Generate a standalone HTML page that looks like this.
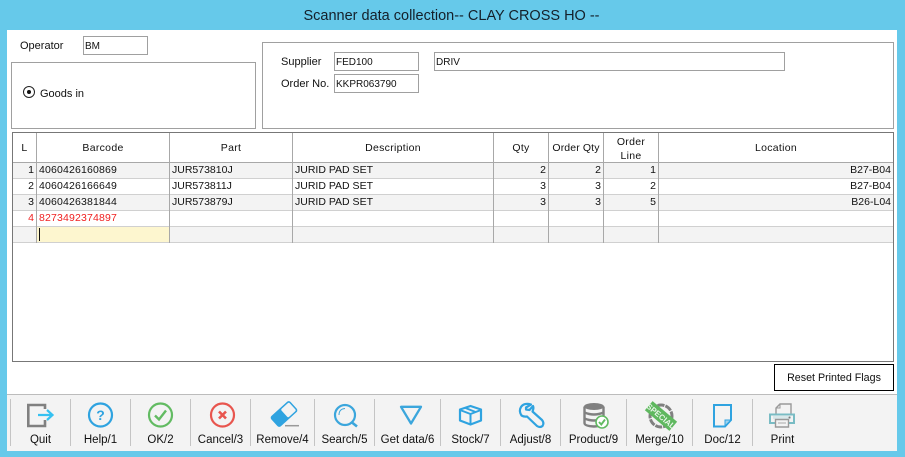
<!DOCTYPE html>
<html>
<head>
<meta charset="utf-8">
<style>
html,body{margin:0;padding:0}
body{width:905px;height:457px;overflow:hidden;position:relative;background:#66c9ea;font-family:"Liberation Sans",sans-serif;font-size:11px;color:#111}
div,span,svg{position:absolute;box-sizing:border-box}
.t{white-space:nowrap;line-height:14px}
.box{border:1px solid #a0a0a0;background:#fff}
.inp{border:1px solid #a0a0a0;background:#fff;padding-left:1px;line-height:19px;font-size:10px;white-space:nowrap}
.vh{width:1px;background:#a8a8a8;top:133px;height:110px}
.row{left:13px;width:880px;height:16px;border-bottom:1px solid #d0d0d0}
.c{white-space:nowrap;line-height:15px;font-size:10.5px}
.n{letter-spacing:.16px}
.h{text-align:center;white-space:nowrap;line-height:14px;font-size:10.5px;letter-spacing:.3px}
.sep{width:1px;background:#c4c4c4;top:399px;height:47px}
.l{top:433px;text-align:center;white-space:nowrap;font-size:11.5px;line-height:14px;color:#111}
</style>
</head>
<body>
<div class="t" style="left:-1px;top:7px;width:905px;text-align:center;font-size:14.5px;line-height:18px;color:#14202a">Scanner data collection-- CLAY CROSS HO --</div>
<div style="left:7px;top:30px;width:890px;height:421px;background:#fff"></div>

<div class="t" style="left:20px;top:39px">Operator</div>
<div class="inp" style="left:83px;top:36px;width:65px;height:19px">BM</div>
<div class="box" style="left:11px;top:62px;width:245px;height:67px"></div>
<svg style="left:22px;top:85px" width="15" height="15" viewBox="0 0 15 15"><circle cx="7" cy="7" r="5.5" fill="#fff" stroke="#222" stroke-width="1"/><circle cx="7" cy="7" r="2" fill="#111"/></svg>
<div class="t" style="left:40px;top:87px">Goods in</div>

<div class="box" style="left:262px;top:42px;width:632px;height:87px"></div>
<div class="t" style="left:281px;top:55px">Supplier</div>
<div class="inp" style="left:334px;top:52px;width:85px;height:19px">FED100</div>
<div class="inp" style="left:434px;top:52px;width:351px;height:19px">DRIV</div>
<div class="t" style="left:281px;top:77px">Order No.</div>
<div class="inp" style="left:334px;top:74px;width:85px;height:19px">KKPR063790</div>

<div style="left:12px;top:132px;width:882px;height:230px;border:1px solid #777;background:#fff"></div>
<div style="left:13px;top:162px;width:880px;height:1px;background:#a8a8a8"></div>

<div class="row" style="top:163px;background:#f3f3f3"></div>
<div class="row" style="top:179px;background:#fff"></div>
<div class="row" style="top:195px;background:#f3f3f3"></div>
<div class="row" style="top:211px;background:#fff"></div>
<div class="row" style="top:227px;background:#f3f3f3"></div>
<div style="left:37px;top:227px;width:132px;height:15px;background:#fdf6cf"></div>
<div style="left:39px;top:228px;width:1px;height:13px;background:#111"></div>

<div class="vh" style="left:36px"></div>
<div class="vh" style="left:169px"></div>
<div class="vh" style="left:292px"></div>
<div class="vh" style="left:493px"></div>
<div class="vh" style="left:548px"></div>
<div class="vh" style="left:603px"></div>
<div class="vh" style="left:658px"></div>

<div class="h" style="left:13px;top:141px;width:23px">L</div>
<div class="h" style="left:37px;top:141px;width:132px">Barcode</div>
<div class="h" style="left:170px;top:141px;width:122px">Part</div>
<div class="h" style="left:293px;top:141px;width:200px">Description</div>
<div class="h" style="left:494px;top:141px;width:54px">Qty</div>
<div class="h" style="left:549px;top:141px;width:54px;letter-spacing:.12px">Order Qty</div>
<div class="h" style="left:604px;top:135px;width:54px">Order<br>Line</div>
<div class="h" style="left:659px;top:141px;width:234px">Location</div>

<div class="c" style="left:13px;top:163px;width:21px;text-align:right">1</div>
<div class="c n" style="left:39px;top:163px">4060426160869</div>
<div class="c" style="left:172px;top:163px">JUR573810J</div>
<div class="c" style="left:295px;top:163px">JURID PAD SET</div>
<div class="c" style="left:494px;top:163px;width:52px;text-align:right">2</div>
<div class="c" style="left:549px;top:163px;width:52px;text-align:right">2</div>
<div class="c" style="left:604px;top:163px;width:52px;text-align:right">1</div>
<div class="c" style="left:659px;top:163px;width:232px;text-align:right">B27-B04</div>

<div class="c" style="left:13px;top:179px;width:21px;text-align:right">2</div>
<div class="c n" style="left:39px;top:179px">4060426166649</div>
<div class="c" style="left:172px;top:179px">JUR573811J</div>
<div class="c" style="left:295px;top:179px">JURID PAD SET</div>
<div class="c" style="left:494px;top:179px;width:52px;text-align:right">3</div>
<div class="c" style="left:549px;top:179px;width:52px;text-align:right">3</div>
<div class="c" style="left:604px;top:179px;width:52px;text-align:right">2</div>
<div class="c" style="left:659px;top:179px;width:232px;text-align:right">B27-B04</div>

<div class="c" style="left:13px;top:195px;width:21px;text-align:right">3</div>
<div class="c n" style="left:39px;top:195px">4060426381844</div>
<div class="c" style="left:172px;top:195px">JUR573879J</div>
<div class="c" style="left:295px;top:195px">JURID PAD SET</div>
<div class="c" style="left:494px;top:195px;width:52px;text-align:right">3</div>
<div class="c" style="left:549px;top:195px;width:52px;text-align:right">3</div>
<div class="c" style="left:604px;top:195px;width:52px;text-align:right">5</div>
<div class="c" style="left:659px;top:195px;width:232px;text-align:right">B26-L04</div>

<div class="c" style="left:13px;top:211px;width:21px;text-align:right;color:#f02020">4</div>
<div class="c n" style="left:39px;top:211px;color:#f02020">8273492374897</div>

<div style="left:774px;top:364px;width:120px;height:27px;border:1px solid #000;background:#fff;text-align:center;line-height:26px;font-size:10.7px;white-space:nowrap">Reset Printed Flags</div>

<div style="left:7px;top:394px;width:890px;height:57px;background:#f3f3f3;border-top:1px solid #bcbcbc"></div>
<div class="sep" style="left:10px"></div>
<div class="sep" style="left:70px"></div>
<div class="sep" style="left:130px"></div>
<div class="sep" style="left:190px"></div>
<div class="sep" style="left:250px"></div>
<div class="sep" style="left:314px"></div>
<div class="sep" style="left:374px"></div>
<div class="sep" style="left:440px"></div>
<div class="sep" style="left:500px"></div>
<div class="sep" style="left:560px"></div>
<div class="sep" style="left:626px"></div>
<div class="sep" style="left:692px"></div>
<div class="sep" style="left:752px"></div>

<svg style="left:0;top:390px" width="905" height="45" viewBox="0 390 905 45" fill="none">
<!-- Quit -->
<path d="M45 409V405H28.300V426H45V420" stroke="#808080" stroke-width="2.600"/>
<path d="M38 415H52M47 410L52.500 415L47 420" stroke="#35c1f1" stroke-width="2.200"/>
<!-- Help -->
<circle cx="100.500" cy="415" r="11.500" stroke="#2fa3e0" stroke-width="2.200"/>
<text x="100.500" y="420" font-family="Liberation Sans" font-size="14" font-weight="bold" text-anchor="middle" fill="#2fa3e0">?</text>
<!-- OK -->
<circle cx="160.500" cy="415" r="11.500" stroke="#62bb62" stroke-width="2.200"/>
<path d="M155 415.500L159 419.500L166 410.500" stroke="#62bb62" stroke-width="2.400"/>
<!-- Cancel -->
<circle cx="222.500" cy="415" r="11.500" stroke="#e8554e" stroke-width="2.200"/>
<path d="M219 411.500L226 418.500M226 411.500L219 418.500" stroke="#e8554e" stroke-width="2.600"/>
<!-- Remove -->
<g transform="rotate(-42 284 414)">
<rect x="271" y="407" width="26" height="14" rx="2.500" fill="#2fa3e0"/>
<rect x="284.500" y="408.500" width="11" height="11" rx="1.500" fill="#f3f3f3"/>
</g>
<path d="M285 425.700H299" stroke="#999" stroke-width="1.500"/>
<!-- Search -->
<circle cx="345" cy="415" r="10" stroke="#3ba6dc" stroke-width="2.200"/>
<path d="M339 415Q339 409 345 408.500" stroke="#3ba6dc" stroke-width="1"/>
<path d="M352 422.500L357 426.500" stroke="#3ba6dc" stroke-width="2.600"/>
<!-- Get data -->
<path d="M401 406.800H421L411 423.500Z" stroke="#3ba6dc" stroke-width="2.300" stroke-linejoin="round"/>
<!-- Stock -->
<path d="M470.500 406L481 409.500V420.500L470.500 424.500L460 420.500V409.500Z" stroke="#2fa3e0" stroke-width="2.200" stroke-linejoin="round"/>
<path d="M460 410L470.500 414L481 410M470.500 414V424M465.500 408L475.500 412" stroke="#2fa3e0" stroke-width="2" stroke-linejoin="round"/>
<!-- Adjust -->
<path d="M531 404.500Q524 402.500 521 407Q518.500 411 521.500 415.500Q524 417 527 416.500L537 426Q540 428 542.500 426Q544.500 423 542 420L532.500 411.500Q534 408 533 406L529.500 410L526 409.500L526 407.500Z" stroke="#2fa3e0" stroke-width="2.200" stroke-linejoin="round"/>
<!-- Product -->
<ellipse cx="594" cy="406.500" rx="10" ry="3.500" fill="#808080"/>
<path d="M584.500 406.500V423Q584.500 426 594 426.500Q603.500 426 603.500 423V406.500" stroke="#808080" stroke-width="2.400"/>
<path d="M584.500 412.500Q594 416.500 603.500 412.500M584.500 418.500Q594 422.500 603.500 418.500" stroke="#808080" stroke-width="2.400"/>
<circle cx="602" cy="422" r="6" fill="#fff" stroke="#62bb62" stroke-width="1.600"/>
<path d="M599 422L601.300 424.500L605 419.500" stroke="#62bb62" stroke-width="1.900"/>
<!-- Merge -->
<circle cx="661" cy="416" r="11" fill="#f3f3f3" stroke="#808080" stroke-width="3" stroke-dasharray="7 1"/>
<g transform="rotate(40 661 416)">
<rect x="645" y="410" width="32" height="12" fill="#5fb85f"/>
<text x="661" y="419" font-family="Liberation Sans" font-size="8" font-weight="bold" text-anchor="middle" fill="#e8f6e8">SPECIAL</text>
</g>
<!-- Doc -->
<path d="M714 405H731V420L725 426.500H714Z" stroke="#2fa3e0" stroke-width="2"/>
<path d="M731 420H725V426Z" fill="#9fd3ef" stroke="#2fa3e0" stroke-width="1"/>
<!-- Print -->
<path d="M776 414V408L780 404H791V414" stroke="#999" stroke-width="1.400"/>
<path d="M776 408H780V404" stroke="#999" stroke-width="1"/>
<path d="M775 423H770V414.500H794V423H789" stroke="#79bcc4" stroke-width="2"/>
<path d="M773 416H791V419H773Z" fill="#d8e8ea"/>
<circle cx="789.500" cy="417.500" r="1" fill="#777"/>
<path d="M775.500 419.500H788.500V427H775.500Z" stroke="#999" stroke-width="1.400"/>
<path d="M778 423H786" stroke="#aaa" stroke-width="1"/>
</svg>

<div class="l" style="left:11px;width:59px">Quit</div>
<div class="l" style="left:71px;width:59px">Help/1</div>
<div class="l" style="left:131px;width:59px">OK/2</div>
<div class="l" style="left:191px;width:59px">Cancel/3</div>
<div class="l" style="left:251px;width:63px">Remove/4</div>
<div class="l" style="left:315px;width:59px">Search/5</div>
<div class="l" style="left:375px;width:65px">Get data/6</div>
<div class="l" style="left:441px;width:59px">Stock/7</div>
<div class="l" style="left:501px;width:59px">Adjust/8</div>
<div class="l" style="left:561px;width:65px">Product/9</div>
<div class="l" style="left:627px;width:65px">Merge/10</div>
<div class="l" style="left:693px;width:59px">Doc/12</div>
<div class="l" style="left:753px;width:59px">Print</div>
</body>
</html>
